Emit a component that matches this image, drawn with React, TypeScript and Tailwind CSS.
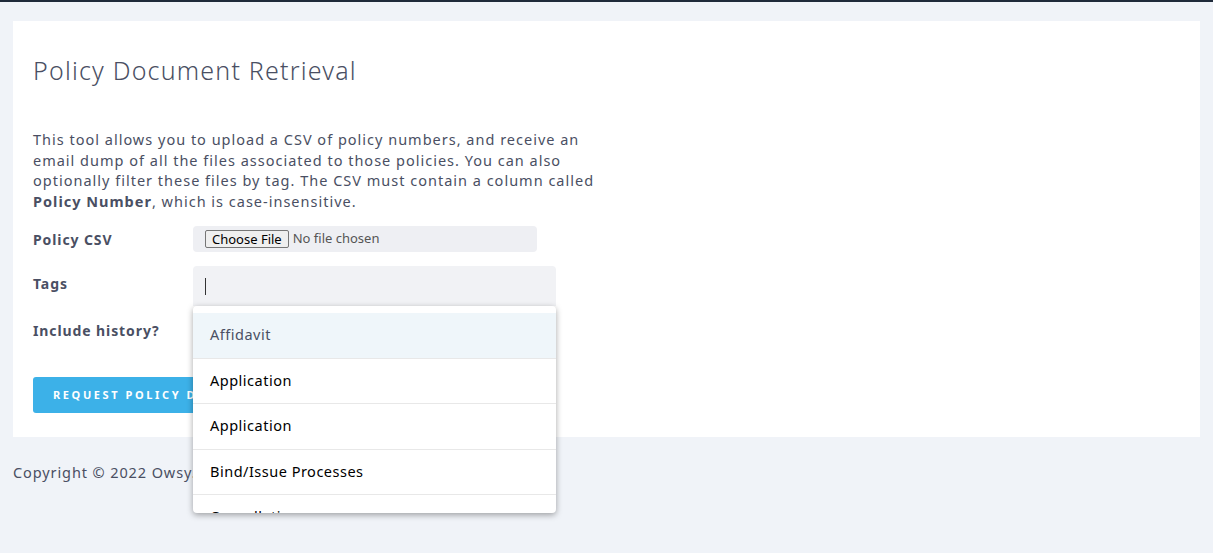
import React from "react";

const tags = ["Affidavit", "Application", "Application", "Bind/Issue Processes", "Cancellation", "Claims"];

export default function App() {
  return (
    <div className="min-h-[553px] bg-[#f0f3f8] border-t-2 border-[#1f2a3a] pt-[19px] px-[13px] text-[#4a4f63] [font-family:'Open_Sans',sans-serif]">
      <div className="bg-white px-5 pt-[33px] pb-5 h-[416px]">
        <h1 className="text-[25px] font-light tracking-[1.2px] leading-8">Policy Document Retrieval</h1>
        <p className="mt-[43px] w-[580px] text-[14.5px] leading-[20.5px] tracking-[1px]">
          This tool allows you to upload a CSV of policy numbers, and receive an
          <br />
          email dump of all the files associated to those policies. You can also
          <br />
          optionally filter these files by tag. The CSV must contain a column called
          <br />
          <b>Policy Number</b>, which is case-insensitive.
        </p>
        <div className="mt-[15px] flex items-center h-[26px]">
          <label className="w-[160px] text-[14px] font-bold tracking-[0.9px]">Policy CSV</label>
          <div className="w-[344px] h-[26px] bg-[#eeeff3] rounded flex items-center px-3 text-[13px] [font-family:'Liberation_Sans',sans-serif]">
            <span className="border border-[#767676] rounded-[2px] bg-[#efefef] px-[6px] leading-[16px] text-black">Choose File</span>
            <span className="ml-1 text-[#555]">No file chosen</span>
          </div>
        </div>
        <div className="mt-[14px] flex">
          <label className="w-[160px] text-[14px] font-bold tracking-[0.9px] pt-[7px]">Tags</label>
          <div className="relative">
            <div className="w-[363px] h-[40px] bg-[#f1f2f5] rounded-t flex items-center px-3">
              <span className="w-px h-[17px] bg-[#333]"></span>
            </div>
            <div className="absolute left-0 top-[40px] w-[363px] h-[207px] bg-white rounded shadow-[0_2px_6px_rgba(0,0,0,0.35)] overflow-hidden z-10 pt-[7px]">
              {tags.map((t, i) => (
                <div
                  key={i}
                  className={`h-[45.5px] flex items-center px-[17px] text-[14.5px] tracking-[0.5px] border-b border-[#e8e8e8] ${
                    i === 0 ? "bg-[#eff6fa] text-[#4a4f63]" : "text-black"
                  }`}
                >
                  {t}
                </div>
              ))}
            </div>
          </div>
        </div>
        <div className="mt-[14px] text-[14px] font-bold tracking-[0.9px]">Include history?</div>
        <button className="mt-[36px] h-[36px] w-[300px] bg-[#3cb1e8] rounded-[3px] text-white text-[11px] font-bold tracking-[2.6px] text-left pl-5 uppercase whitespace-nowrap overflow-hidden">
          Request Policy Documents
        </button>
      </div>
      <div className="mt-[25px] text-[14.5px] tracking-[0.9px]">Copyright © 2022 Owsy. All rights reserved.</div>
    </div>
  );
}
